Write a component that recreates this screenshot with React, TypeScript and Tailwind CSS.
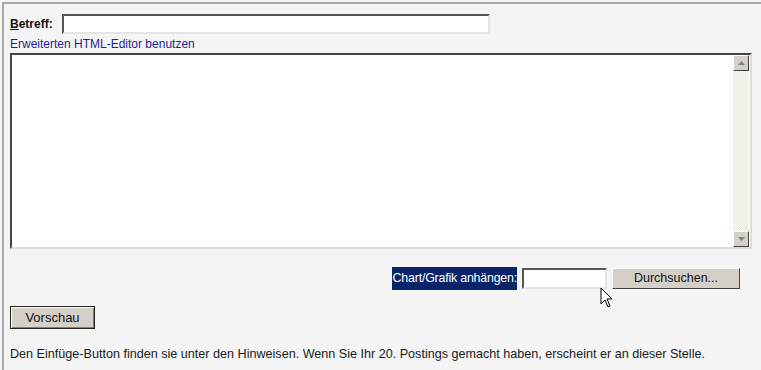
import * as React from 'react';

function Scrollbar() {
  return (
    <div className="flex w-[16px] flex-col bg-[repeating-conic-gradient(#ffffff_0_25%,#e6e3dd_0_50%)] bg-[length:2px_2px]">
      <div className="flex h-[16px] items-center justify-center border border-t-white border-l-white border-r-[#404040] border-b-[#404040] bg-[#d4d0c8]">
        <svg width="7" height="4" viewBox="0 0 7 4"><path d="M3.5 0 L7 4 L0 4 Z" fill="#808080" /></svg>
      </div>
      <div className="flex-1" />
      <div className="flex h-[16px] items-center justify-center border border-t-white border-l-white border-r-[#404040] border-b-[#404040] bg-[#d4d0c8]">
        <svg width="7" height="4" viewBox="0 0 7 4"><path d="M0 0 L7 0 L3.5 4 Z" fill="#808080" /></svg>
      </div>
    </div>
  );
}

function Cursor() {
  return (
    <svg className="absolute left-[600px] top-[287px]" width="14" height="22" viewBox="0 0 14 22">
      <path d="M1 1 L1 17 L5 13 L8 20 L10 19 L7 12 L12 12 Z" fill="#ffffff" stroke="#000000" strokeWidth="1" strokeLinejoin="miter" />
    </svg>
  );
}

export default function App() {
  return (
    <div className="relative h-[370px] w-[761px] overflow-hidden bg-[#f4f4f4] pl-[2px] pt-[2px] font-['Liberation_Sans',Arial,sans-serif] text-[12px] text-[#1a1a1a]">
      <div className="h-full border-l-2 border-t-2 border-[#a8a8a8] pl-[6px] pt-[10px]">
        <div className="flex items-center">
          <span className="w-[52px] font-bold text-[#111]"><span className="underline">B</span>etreff:</span>
          <div className="h-[20px] w-[428px] border-2 border-b-[#e4e4e4] border-l-[#555] border-r-[#e4e4e4] border-t-[#555] bg-white" />
        </div>
        <div className="mt-[3px] leading-[14px] text-[#1f1f95]">Erweiterten HTML-Editor benutzen</div>
        <div className="mt-[2px] flex h-[196px] w-[742px] border-2 border-b-[#dcdcdc] border-l-[#444] border-r-[#dcdcdc] border-t-[#444] bg-white">
          <div className="flex-1" />
          <Scrollbar />
          <div className="w-[1px]" />
        </div>
        <div className="mt-[18px] flex w-[730px] items-center justify-end">
          <span className="flex h-[23px] items-center bg-[#0a246a] pl-[1px] text-[12.4px] tracking-[-0.2px] text-white">Chart/Grafik anhängen:</span>
          <div className="ml-[5px] h-[21px] w-[85px] border-2 border-b-[#e4e4e4] border-l-[#555] border-r-[#e4e4e4] border-t-[#555] bg-white" />
          <div className="ml-[5px] flex h-[21px] w-[128px] items-center justify-center border border-b-[#404040] border-l-white border-r-[#404040] border-t-white bg-[#d4d0c8] text-[12.5px] text-[#111]">Durchsuchen...</div>
        </div>
        <div className="mt-[16px] flex h-[23px] w-[85px] items-center justify-center border border-[#222] bg-[#d4d0c8] text-[13px] text-[#111] shadow-[inset_1px_1px_0_#fff,inset_-1px_-1px_0_#808080]">Vorschau</div>
        <div className="mt-[16px] text-[12.6px] text-[#1a1a1a]">Den Einfüge-Button finden sie unter den Hinweisen. Wenn Sie Ihr 20. Postings gemacht haben, erscheint er an dieser Stelle.</div>
      </div>
      <Cursor />
    </div>
  );
}
